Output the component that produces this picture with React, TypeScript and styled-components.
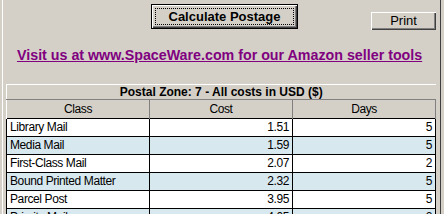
import styled, { createGlobalStyle } from "styled-components"

const GlobalStyle = createGlobalStyle`
	html, body {
		margin: 0;
		padding: 0;
		background: #d4d0c8;
		overflow: hidden;
	}
`

const rows = [
	{ name: "Library Mail", cost: "1.51", days: "5" },
	{ name: "Media Mail", cost: "1.59", days: "5" },
	{ name: "First-Class Mail", cost: "2.07", days: "2" },
	{ name: "Bound Printed Matter", cost: "2.32", days: "5" },
	{ name: "Parcel Post", cost: "3.95", days: "5" },
	{ name: "Priority Mail", cost: "4.05", days: "2" },
]

const App = () => {
	return (
		<>
			<GlobalStyle />
			<Page>
				<Frame>
					<ButtonRow>
						<DefaultButton>
							<FocusRing>Calculate Postage</FocusRing>
						</DefaultButton>
						<PlainButton>Print</PlainButton>
					</ButtonRow>

					<LinkRow>
						<SellerLink href="#">
							Visit us at www.SpaceWare.com for our Amazon seller tools
						</SellerLink>
					</LinkRow>

					<Grid>
						<thead>
							<tr>
								<TitleCell colSpan={3}>
									Postal Zone: 7 - All costs in USD ($)
								</TitleCell>
							</tr>
							<tr>
								<HeadCell style={{ width: 258 }}>Class</HeadCell>
								<HeadCell style={{ width: 85 }}>Cost</HeadCell>
								<HeadCell>Days</HeadCell>
							</tr>
						</thead>
						<tbody>
							{rows.map((r, i) => (
								<Row key={r.name} $alt={i % 2 === 1}>
									<Cell>{r.name}</Cell>
									<Cell $right>{r.cost}</Cell>
									<Cell $right>{r.days}</Cell>
								</Row>
							))}
						</tbody>
					</Grid>
				</Frame>
			</Page>
		</>
	)
}

export default App

const Page = styled.div`
	width: 444px;
	height: 214px;
	padding-left: 2px;
	box-sizing: border-box;
	overflow: hidden;
`

const Frame = styled.div`
	width: 439px;
	height: 214px;
	box-sizing: border-box;
	border-left: 1px solid #ffffff;
	border-right: 1px solid #404040;
	overflow: hidden;
`

const ButtonRow = styled.div`
	display: flex;
	align-items: flex-start;
	padding-left: 148px;
	height: 30px;
`

const DefaultButton = styled.button`
	width: 147px;
	height: 25px;
	margin-top: 4px;
	padding: 0;
	background: #d4d0c8;
	border: 1px solid #000000;
	box-shadow: inset 1px 1px 0 #ffffff, inset -1px -1px 0 #404040,
		inset -2px -2px 0 #808080;
	font-family: "Liberation Sans", Arial, sans-serif;
	font-weight: 700;
	font-size: 13px;
	color: #000000;
	display: flex;
	align-items: stretch;
`

const FocusRing = styled.span`
	flex: 1;
	margin: 3px;
	border: 1px dotted #000000;
	display: flex;
	align-items: center;
	justify-content: center;
	line-height: 1;
`

const PlainButton = styled.button`
	width: 65px;
	height: 18px;
	margin-top: 12px;
	margin-left: 73px;
	padding: 0 0 1px;
	background: #d4d0c8;
	border: none;
	box-shadow: inset 1px 1px 0 #ffffff, inset -1px -1px 0 #404040,
		inset -2px -2px 0 #808080;
	font-family: "Liberation Sans", Arial, sans-serif;
	font-size: 13px;
	color: #000000;
	line-height: 1;
`

const LinkRow = styled.div`
	height: 54px;
	padding-left: 14px;
	padding-top: 16px;
	box-sizing: border-box;
`

const SellerLink = styled.a`
	font-family: "Liberation Sans", Arial, sans-serif;
	font-weight: 700;
	font-size: 14.25px;
	color: #800080;
	text-decoration: underline;
	line-height: 16px;
`

const Grid = styled.table`
	margin-left: 3px;
	width: 430px;
	border-collapse: collapse;
	table-layout: fixed;
	font-family: "Liberation Sans", Arial, sans-serif;
	font-size: 12px;
	letter-spacing: -0.4px;
	color: #000000;
`

const TitleCell = styled.th`
	height: 14px;
	padding: 0;
	background: #d4d0c8;
	border-top: 1px solid #ffffff;
	border-left: 1px solid #ffffff;
	border-bottom: 1px solid #808080;
	font-weight: 700;
	letter-spacing: 0;
	line-height: 14px;
	text-align: center;
`

const HeadCell = styled.th`
	height: 18px;
	padding: 0;
	background: #d4d0c8;
	border-top: 1px solid #ffffff;
	border-left: 1px solid #ffffff;
	border-right: 1px solid #808080;
	font-weight: 400;
	line-height: 18px;
	text-align: center;
`

const Row = styled.tr<{ $alt?: boolean }>`
	background: ${(p) => (p.$alt ? "#d8e8ef" : "#ffffff")};
`

const Cell = styled.td<{ $right?: boolean }>`
	height: 17px;
	padding: 0 3px;
	border: 1px solid #000000;
	line-height: 17px;
	text-align: ${(p) => (p.$right ? "right" : "left")};
	white-space: nowrap;
`
